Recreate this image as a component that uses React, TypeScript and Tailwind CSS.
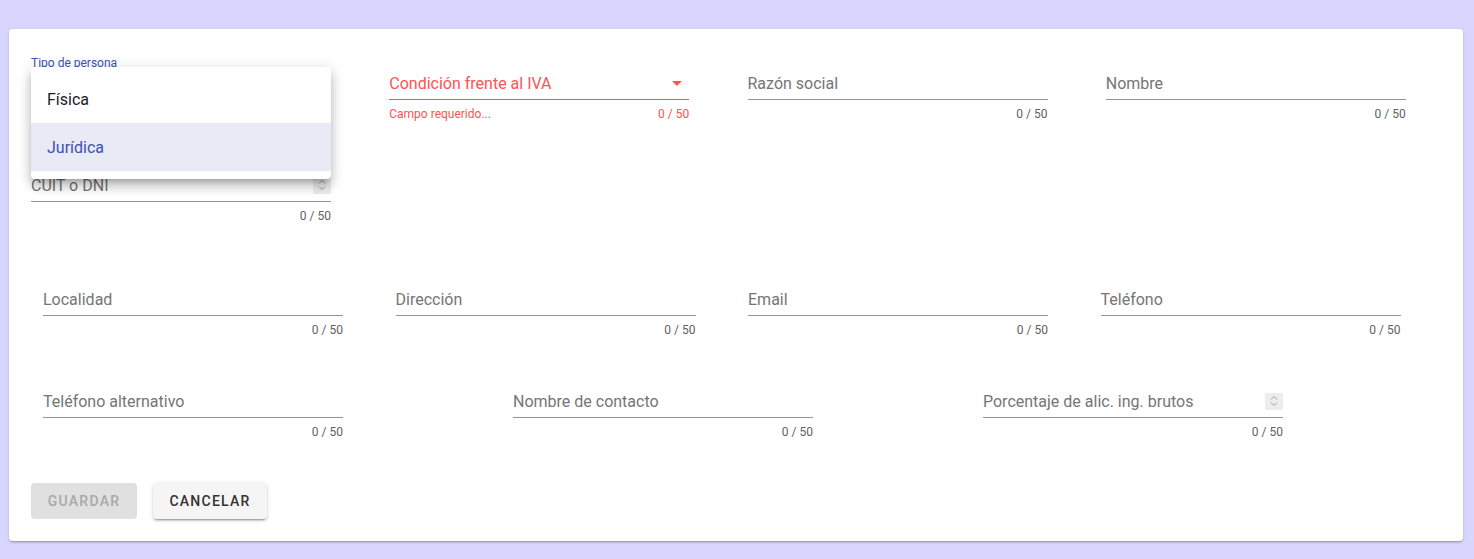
import React from "react";

type FieldProps = {
  label: string;
  error?: boolean;
  spinner?: boolean;
  select?: boolean;
  hint?: string;
};

const Spinner = () => (
  <span className="flex h-[17px] w-[18px] items-center justify-center bg-[#ededed]">
    <svg width="8" height="12" viewBox="0 0 8 12" fill="none" stroke="#9e9e9e" strokeWidth="1">
      <path d="M1 4.5 L4 1.5 L7 4.5" />
      <path d="M1 7.5 L4 10.5 L7 7.5" />
    </svg>
  </span>
);

const Field = ({ label, error, spinner, select, hint }: FieldProps) => {
  return (
    <div className="w-[300px]">
      <div className="flex h-6 items-center justify-between">
        <span
          className={
            "pt-0.5 text-base leading-6 " +
            (error ? "text-[#ff5252]" : "text-[#757575]")
          }
        >
          {label}
        </span>
        {spinner && <Spinner />}
        {select && (
          <svg width="24" height="24" viewBox="0 0 24 24">
            <path d="M7 10l5 5 5-5z" fill={error ? "#ff5252" : "#757575"} />
          </svg>
        )}
      </div>
      <div
        className={
          "mt-1 h-px " + (error ? "bg-[#ff5252]" : "bg-[#949494]")
        }
      />
      <div
        className={
          "mt-[7px] flex justify-between pt-px text-xs leading-3 " +
          (error ? "text-[#ff5252]" : "text-[#616161]")
        }
      >
        <span>{hint}</span>
        <span>0 / 50</span>
      </div>
    </div>
  );
};

export default function App() {
  return (
    <div
      className="min-h-[559px] bg-[#d8d6fe] pl-[9px] pr-[11px] pt-[29px] pb-[18px]"
      style={{ fontFamily: "Roboto, 'Liberation Sans', sans-serif" }}
    >
      <div className="rounded bg-white pt-[42px] pb-[22px] shadow-[0_2px_2px_-1px_rgba(0,0,0,0.25),0_1px_3px_rgba(0,0,0,0.15)]">
        {/* FIRST BLOCK */}
        <div className="ml-[22px] grid w-[1433px] grid-cols-4">
          <div className="relative">
            <span className="absolute -top-[14px] left-0 text-xs leading-3 text-[#3f51b5]">
              Tipo de persona
            </span>
            <Field label="" />
            {/* OPEN MENU */}
            <div className="absolute -top-1 left-0 z-10 w-[300px] rounded bg-white py-2 shadow-[0_5px_5px_-3px_rgba(0,0,0,0.2),0_8px_10px_1px_rgba(0,0,0,0.14),0_3px_14px_2px_rgba(0,0,0,0.12)]">
              <div className="flex h-12 items-center px-4 pt-0.5 text-base text-[#212121]">
                Física
              </div>
              <div className="flex h-12 items-center bg-[#e8eaf6] px-4 pt-0.5 text-base text-[#3f51b5]">
                Jurídica
              </div>
            </div>
          </div>
          <Field label="Condición frente al IVA" error select hint="Campo requerido..." />
          <Field label="Razón social" />
          <Field label="Nombre" />
        </div>

        <div className="mt-[53px] ml-[22px] grid w-[1433px] grid-cols-4">
          <Field label="CUIT o DNI" spinner />
        </div>

        <div className="mt-[65px] ml-[22px] grid w-[1410px] grid-cols-4">
          <div className="px-3"><Field label="Localidad" /></div>
          <div className="px-3"><Field label="Dirección" /></div>
          <div className="px-3"><Field label="Email" /></div>
          <div className="px-3"><Field label="Teléfono" /></div>
        </div>

        <div className="mt-[53px] ml-[22px] grid w-[1410px] grid-cols-3">
          <div className="px-3"><Field label="Teléfono alternativo" /></div>
          <div className="px-3"><Field label="Nombre de contacto" /></div>
          <div className="px-3"><Field label="Porcentaje de alic. ing. brutos" spinner /></div>
        </div>

        {/* ACTIONS */}
        <div className="mt-[45px] ml-[22px] flex gap-4">
          <button className="h-9 w-[106px] rounded bg-[#e0e0e0] text-sm font-medium tracking-[1.25px] text-[#a8a8a8]">
            GUARDAR
          </button>
          <button className="h-9 w-[114px] rounded bg-[#f5f5f5] text-sm font-medium tracking-[1.25px] text-[#333] shadow-[0_3px_1px_-2px_rgba(0,0,0,0.2),0_2px_2px_0_rgba(0,0,0,0.14),0_1px_5px_0_rgba(0,0,0,0.12)]">
            CANCELAR
          </button>
        </div>
      </div>
    </div>
  );
}
